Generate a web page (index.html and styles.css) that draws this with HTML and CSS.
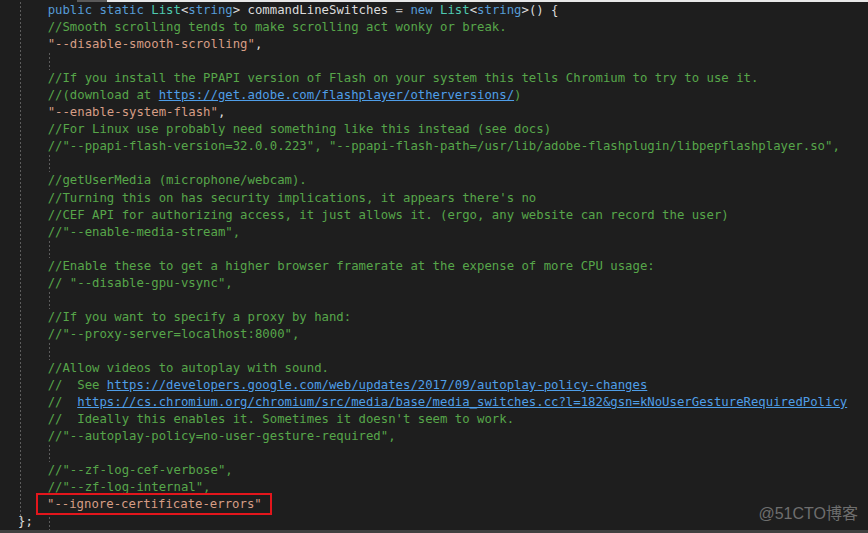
FILE: index.html
```html
<!DOCTYPE html>
<html>
<head>
    <title>commandLineSwitches</title>
    <link rel="stylesheet" href="styles.css">
</head>
<body>
    <div class="editor">
        <div class="topbar">
            <span class="seg-dark"></span>
            <span class="seg-grey"></span>
            <span class="seg-light"></span>
        </div>

        <div class="code">
            <div class="ln">    <span class="kw">public</span> <span class="kw">static</span> <span class="ty">List</span>&lt;<span class="kw">string</span>&gt; commandLineSwitches <span class="op">=</span> <span class="kw">new</span> <span class="ty">List</span>&lt;<span class="kw">string</span>&gt;() {</div>
            <div class="ln">    <span class="cm">//Smooth scrolling tends to make scrolling act wonky or break.</span></div>
            <div class="ln">    <span class="str">"--disable-smooth-scrolling"</span>,</div>
            <div class="ln blank"></div>
            <div class="ln">    <span class="cm">//If you install the PPAPI version of Flash on your system this tells Chromium to try to use it.</span></div>
            <div class="ln">    <span class="cm">//(download at <span class="url">https://get.adobe.com/flashplayer/otherversions/</span>)</span></div>
            <div class="ln">    <span class="str">"--enable-system-flash"</span>,</div>
            <div class="ln">    <span class="cm">//For Linux use probably need something like this instead (see docs)</span></div>
            <div class="ln">    <span class="cm">//"--ppapi-flash-version=32.0.0.223", "--ppapi-flash-path=/usr/lib/adobe-flashplugin/libpepflashplayer.so",</span></div>
            <div class="ln blank"></div>
            <div class="ln">    <span class="cm">//getUserMedia (microphone/webcam).</span></div>
            <div class="ln">    <span class="cm">//Turning this on has security implications, it appears there's no</span></div>
            <div class="ln">    <span class="cm">//CEF API for authorizing access, it just allows it. (ergo, any website can record the user)</span></div>
            <div class="ln">    <span class="cm">//"--enable-media-stream",</span></div>
            <div class="ln blank"></div>
            <div class="ln">    <span class="cm">//Enable these to get a higher browser framerate at the expense of more CPU usage:</span></div>
            <div class="ln">    <span class="cm">// "--disable-gpu-vsync",</span></div>
            <div class="ln blank"></div>
            <div class="ln">    <span class="cm">//If you want to specify a proxy by hand:</span></div>
            <div class="ln">    <span class="cm">//"--proxy-server=localhost:8000",</span></div>
            <div class="ln blank"></div>
            <div class="ln">    <span class="cm">//Allow videos to autoplay with sound.</span></div>
            <div class="ln">    <span class="cm">//  See <span class="url">https://developers.google.com/web/updates/2017/09/autoplay-policy-changes</span></span></div>
            <div class="ln">    <span class="cm">//  <span class="url">https://cs.chromium.org/chromium/src/media/base/media_switches.cc?l=182&amp;gsn=kNoUserGestureRequiredPolicy</span></span></div>
            <div class="ln">    <span class="cm">//  Ideally this enables it. Sometimes it doesn't seem to work.</span></div>
            <div class="ln">    <span class="cm">//"--autoplay-policy=no-user-gesture-required",</span></div>
            <div class="ln blank"></div>
            <div class="ln">    <span class="cm">//"--zf-log-cef-verbose",</span></div>
            <div class="ln">    <span class="cm">//"--zf-log-internal",</span></div>
            <div class="ln"><span class="mark"><span class="str">"--ignore-certificate-errors"</span></span></div>
            <div class="ln blank">};</div>
        </div>

        <div class="watermark">@51CTO博客</div>
    </div>
</body>
</html>
```

FILE: styles.css
```css
body {
    margin: 0;
    padding: 0;
    background-color: #1e1e1e;
    overflow: hidden;
}

.editor {
    position: relative;
    box-sizing: border-box;
    width: 868px;
    height: 533px;
    display: flex;
    flex-direction: column;
    overflow: hidden;
    background-color: #1e1e1e;
    border-bottom: 3px solid #404040;
}

.topbar {
    display: flex;
    flex: none;
    height: 2px;
}

.seg-dark {
    width: 77px;
    background-color: #1e1e1e;
}

.seg-grey {
    width: 30px;
    background-color: #5a5a5a;
}

.seg-light {
    flex: 1;
    background-color: #e8e8e8;
}

.code {
    flex: 1;
    min-height: 0;
    padding-left: 18px;
    font-family: "DejaVu Sans Mono", "Liberation Mono", monospace;
    font-size: 12.3px;
    line-height: 17.05px;
    color: #dcdcdc;
    background-image: repeating-linear-gradient(to bottom, #5c5c5c 0, #5c5c5c 2px, transparent 2px, transparent 4px);
    background-size: 1px 100%;
    background-position: 20px 0;
    background-repeat: no-repeat;
}

.ln {
    height: 17.05px;
    white-space: pre;
}

.ln.blank {
    background-image: repeating-linear-gradient(to bottom, #5c5c5c 0, #5c5c5c 2px, transparent 2px, transparent 4px);
    background-size: 1px 100%;
    background-position: 31px 0;
    background-repeat: no-repeat;
}

.kw {
    color: #569cd6;
}

.ty {
    color: #4ec9b0;
}

.op {
    color: #b4b4b4;
}

.cm {
    color: #57a64a;
}

.str {
    color: #d69d85;
}

.url {
    color: #4f9ee8;
    text-decoration: underline;
}

.mark {
    margin-left: 18px;
    padding: 2px 8px 2px 9px;
    border: 2px solid #e3161c;
}

.watermark {
    position: absolute;
    right: 10px;
    bottom: 6px;
    font-family: "Liberation Sans", "Noto Sans CJK SC", sans-serif;
    font-size: 16px;
    color: #6e6e6e;
}
```
